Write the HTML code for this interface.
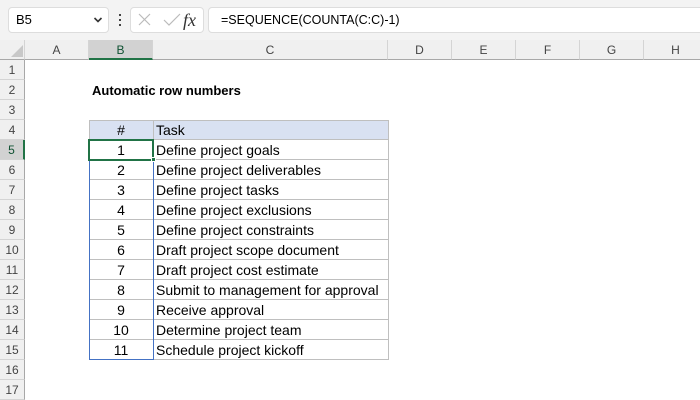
<!DOCTYPE html><html><head><style>
body{margin:0;width:700px;height:400px;overflow:hidden;background:#fff;font-family:"Liberation Sans",sans-serif;position:relative}
div{position:absolute;box-sizing:border-box}
.t{font-size:14px;color:#000;line-height:21px}
.ch{top:40px;height:20px;border-right:1px solid #d4d4d4;text-align:center;font-size:12px;line-height:20px;color:#444;border-bottom:1px solid #a8a8a8}
.rh{left:0;width:25px;height:20px;border-bottom:1px solid #d4d4d4;text-align:center;font-size:12px;line-height:20px;color:#444;background:#f0f0f0;border-right:1px solid #a8a8a8}
</style></head><body>
<div style="left:0;top:0;width:700px;height:40px;background:#f3f3f3"></div>
<div style="left:8px;top:7px;width:101px;height:26px;background:#fff;border:1px solid #ddd;border-radius:4px;font-size:13px;line-height:24px;padding-left:7px">B5</div>
<svg style="position:absolute;left:93px;top:16px" width="10" height="8"><path d="M1.5 2 L5 5.5 L8.5 2" stroke="#333" stroke-width="1.6" fill="none"/></svg>
<div style="left:119px;top:14px;width:2px;height:2px;background:#444"></div>
<div style="left:119px;top:19px;width:2px;height:2px;background:#444"></div>
<div style="left:119px;top:24px;width:2px;height:2px;background:#444"></div>
<div style="left:130px;top:7px;width:74px;height:26px;background:#fff;border:1px solid #ddd;border-radius:4px"></div>
<svg style="position:absolute;left:136px;top:11px" width="70" height="20"><path d="M3 3 L14 14 M14 3 L3 14" stroke="#bbb" stroke-width="1.2"/><path d="M28 9 L33 14 L44 3" stroke="#bbb" stroke-width="1.2" fill="none"/><text x="47" y="15" font-family="Liberation Serif" font-style="italic" font-size="18" fill="#333">fx</text></svg>
<div style="left:208px;top:7px;width:500px;height:26px;background:#fff;border:1px solid #ddd;border-radius:4px;font-size:12.5px;line-height:24px;padding-left:12px">=SEQUENCE(COUNTA(C:C)-1)</div>
<div style="left:0;top:40px;width:700px;height:20px;background:#f0f0f0;border-bottom:1px solid #a8a8a8"></div>
<svg style="position:absolute;left:10px;top:44px" width="14" height="14"><path d="M13 1 L13 13 L1 13 Z" fill="#c8c8c8"/></svg>
<div class="ch" style="left:0;width:25px;border-right:1px solid #d4d4d4"></div>
<div class="ch" style="left:25px;width:64px">A</div>
<div class="ch" style="left:89px;width:64px;background:#d2d2d2;border-bottom:2px solid #217346;color:#0f5132">B</div>
<div class="ch" style="left:153px;width:235px">C</div>
<div class="ch" style="left:388px;width:64px">D</div>
<div class="ch" style="left:452px;width:64px">E</div>
<div class="ch" style="left:516px;width:64px">F</div>
<div class="ch" style="left:580px;width:64px">G</div>
<div class="ch" style="left:644px;width:64px">H</div>
<div class="rh" style="top:60px">1</div>
<div class="rh" style="top:80px">2</div>
<div class="rh" style="top:100px">3</div>
<div class="rh" style="top:120px">4</div>
<div class="rh" style="top:140px;background:#d2d2d2;border-right:2px solid #217346;color:#0f5132">5</div>
<div class="rh" style="top:160px">6</div>
<div class="rh" style="top:180px">7</div>
<div class="rh" style="top:200px">8</div>
<div class="rh" style="top:220px">9</div>
<div class="rh" style="top:240px">10</div>
<div class="rh" style="top:260px">11</div>
<div class="rh" style="top:280px">12</div>
<div class="rh" style="top:300px">13</div>
<div class="rh" style="top:320px">14</div>
<div class="rh" style="top:340px">15</div>
<div class="rh" style="top:360px">16</div>
<div class="rh" style="top:380px">17</div>
<div class="t" style="left:92px;top:80px;font-weight:bold;font-size:13px">Automatic row numbers</div>
<div style="left:89px;top:120px;width:300px;height:20px;background:#d9e1f2;border:1px solid #bfbfbf"></div>
<div style="left:153px;top:120px;width:1px;height:240px;background:#bfbfbf"></div>
<div style="left:388px;top:120px;width:1px;height:240px;background:#bfbfbf"></div>
<div class="t" style="left:89px;top:120px;width:64px;text-align:center">#</div>
<div class="t" style="left:156px;top:120px">Task</div>
<div style="left:153px;top:159px;width:236px;height:1px;background:#bfbfbf"></div>
<div style="left:153px;top:179px;width:236px;height:1px;background:#bfbfbf"></div>
<div style="left:153px;top:199px;width:236px;height:1px;background:#bfbfbf"></div>
<div style="left:153px;top:219px;width:236px;height:1px;background:#bfbfbf"></div>
<div style="left:153px;top:239px;width:236px;height:1px;background:#bfbfbf"></div>
<div style="left:153px;top:259px;width:236px;height:1px;background:#bfbfbf"></div>
<div style="left:153px;top:279px;width:236px;height:1px;background:#bfbfbf"></div>
<div style="left:153px;top:299px;width:236px;height:1px;background:#bfbfbf"></div>
<div style="left:153px;top:319px;width:236px;height:1px;background:#bfbfbf"></div>
<div style="left:89px;top:339px;width:300px;height:1px;background:#bfbfbf"></div>
<div style="left:89px;top:359px;width:300px;height:1px;background:#bfbfbf"></div>
<div style="left:89px;top:179px;width:64px;height:1px;background:#bfbfbf"></div>
<div style="left:89px;top:199px;width:64px;height:1px;background:#bfbfbf"></div>
<div style="left:89px;top:219px;width:64px;height:1px;background:#bfbfbf"></div>
<div style="left:89px;top:239px;width:64px;height:1px;background:#bfbfbf"></div>
<div style="left:89px;top:259px;width:64px;height:1px;background:#bfbfbf"></div>
<div style="left:89px;top:279px;width:64px;height:1px;background:#bfbfbf"></div>
<div style="left:89px;top:299px;width:64px;height:1px;background:#bfbfbf"></div>
<div style="left:89px;top:319px;width:64px;height:1px;background:#bfbfbf"></div>
<div style="left:89px;top:140px;width:65px;height:220px;border:1px solid #4472c4"></div>
<div style="left:88px;top:139px;width:66px;height:22px;border:2px solid #217346"></div>
<div style="left:151px;top:157px;width:5px;height:5px;background:#217346;border:1px solid #fff"></div>
<div class="t" style="left:89px;top:140px;width:64px;text-align:center">1</div>
<div class="t" style="left:89px;top:160px;width:64px;text-align:center">2</div>
<div class="t" style="left:89px;top:180px;width:64px;text-align:center">3</div>
<div class="t" style="left:89px;top:200px;width:64px;text-align:center">4</div>
<div class="t" style="left:89px;top:220px;width:64px;text-align:center">5</div>
<div class="t" style="left:89px;top:240px;width:64px;text-align:center">6</div>
<div class="t" style="left:89px;top:260px;width:64px;text-align:center">7</div>
<div class="t" style="left:89px;top:280px;width:64px;text-align:center">8</div>
<div class="t" style="left:89px;top:300px;width:64px;text-align:center">9</div>
<div class="t" style="left:89px;top:320px;width:64px;text-align:center">10</div>
<div class="t" style="left:89px;top:340px;width:64px;text-align:center">11</div>
<div class="t" style="left:156px;top:140px">Define project goals</div>
<div class="t" style="left:156px;top:160px">Define project deliverables</div>
<div class="t" style="left:156px;top:180px">Define project tasks</div>
<div class="t" style="left:156px;top:200px">Define project exclusions</div>
<div class="t" style="left:156px;top:220px">Define project constraints</div>
<div class="t" style="left:156px;top:240px">Draft project scope document</div>
<div class="t" style="left:156px;top:260px">Draft project cost estimate</div>
<div class="t" style="left:156px;top:280px">Submit to management for approval</div>
<div class="t" style="left:156px;top:300px">Receive approval</div>
<div class="t" style="left:156px;top:320px">Determine project team</div>
<div class="t" style="left:156px;top:340px">Schedule project kickoff</div>
</body></html>
